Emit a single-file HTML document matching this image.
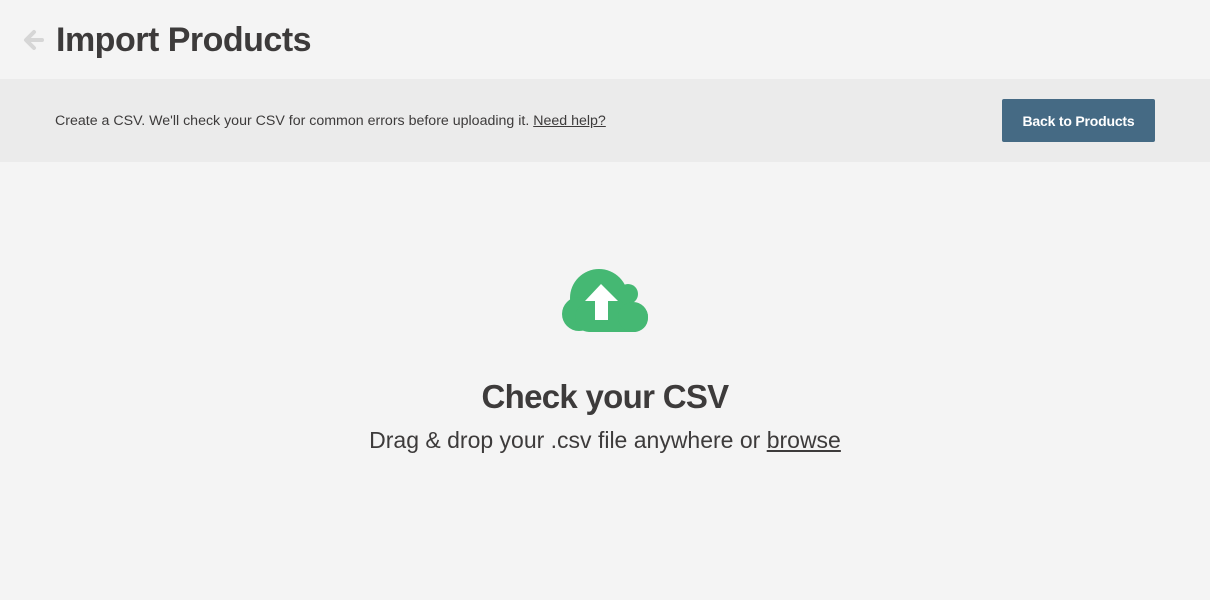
<!DOCTYPE html>
<html><head><style>
body{margin:0;width:1210px;height:600px;background:#f4f4f4;font-family:"Liberation Sans",sans-serif;color:#3d3b3b;overflow:hidden;position:relative}
h1{position:absolute;left:56px;top:21px;margin:0;font-size:34px;font-weight:bold;letter-spacing:-0.5px}
.bar{position:absolute;left:0;top:79px;width:1210px;height:83px;background:#ebebeb}
.bar p{position:absolute;left:55px;top:34px;margin:0;font-size:14.2px}
.btn{position:absolute;left:1002px;top:20px;width:153px;height:43px;background:#456a84;color:#fff;border-radius:2px;font-size:14px;font-weight:bold;text-align:center;line-height:45px;letter-spacing:-0.2px}
h2{position:absolute;left:0;width:1210px;top:378px;margin:0;text-align:center;font-size:33px;font-weight:bold;letter-spacing:-0.7px}
.sub{position:absolute;left:0;width:1210px;top:427px;text-align:center;font-size:23px}
a{color:#3d3b3b}
</style></head><body>
<svg style="position:absolute;left:22px;top:29px" width="24" height="22" viewBox="0 0 24 22"><path d="M20 11H5M12 3L4 11l8 8" stroke="#d6d6d6" stroke-width="4" fill="none" stroke-linecap="round" stroke-linejoin="round"/></svg>
<h1>Import Products</h1>
<div class="bar"><p>Create a CSV. We'll check your CSV for common errors before uploading it. <a href="#">Need help?</a></p><div class="btn">Back to Products</div></div>
<svg style="position:absolute;left:0;top:0" width="1210" height="600">
<g fill="#45b873"><circle cx="599" cy="298" r="29"/><circle cx="628" cy="294" r="10"/><circle cx="579" cy="314" r="17"/><rect x="575" y="303" width="73" height="29" rx="14"/><circle cx="633" cy="317" r="15"/></g>
<path d="M601 284L585 301H595V320H608V301H618Z" fill="#fff"/>
</svg>
<h2>Check your CSV</h2>
<div class="sub">Drag &amp; drop your .csv file anywhere or <a href="#">browse</a></div>
</body></html>
